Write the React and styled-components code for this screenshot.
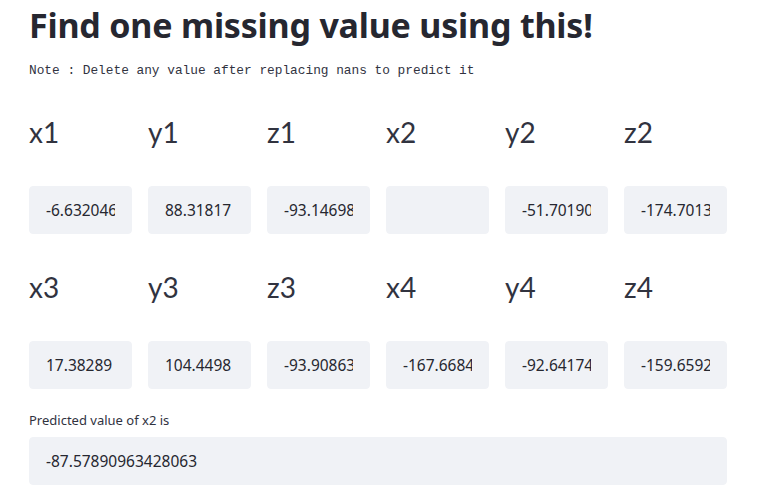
import React from "react";
import styled, { createGlobalStyle } from "styled-components";

const GlobalStyle = createGlobalStyle`
  body {
    margin: 0;
    background: #ffffff;
    color: #262730;
    font-family: Lato, "Noto Sans", sans-serif;
  }
`;

const Page = styled.div`
  width: 698px;
  padding: 0 0 0 29px;
`;

const Title = styled.h1`
  margin: 0;
  padding-top: 2px;
  font-family: "Noto Sans", sans-serif;
  font-weight: 700;
  font-size: 34px;
  line-height: 46px;
  letter-spacing: -0.2px;
  color: #262730;
`;

const Note = styled.pre`
  margin: 14px 0 0;
  font-family: "Liberation Mono", "DejaVu Sans Mono", monospace;
  font-size: 12.8px;
  line-height: 18px;
  color: #31333f;
`;

const Grid = styled.div`
  display: grid;
  grid-template-columns: repeat(6, 103px);
  column-gap: 16px;
  row-gap: 33px;
  margin-top: 32px;
`;

const Field = styled.div`
  display: flex;
  flex-direction: column;
`;

const FieldLabel = styled.h3`
  margin: 0 0 34px;
  font-family: Lato, "Noto Sans", sans-serif;
  font-weight: 400;
  font-size: 28px;
  line-height: 40px;
  color: #31333f;
`;

const InputBox = styled.div`
  box-sizing: border-box;
  display: flex;
  align-items: center;
  height: 48px;
  padding: 0 16px;
  border: 1px solid #f0f2f6;
  border-radius: 4px;
  background: #f0f2f6;
  overflow: hidden;
`;

const Input = styled.input`
  width: 100%;
  min-width: 0;
  padding: 0;
  border: none;
  background: transparent;
  font-family: "Noto Sans", sans-serif;
  font-size: 15.5px;
  color: #262730;
  outline: none;
`;

const ResultLabel = styled.label`
  display: block;
  margin-top: 22px;
  font-family: "Noto Sans", sans-serif;
  font-size: 13px;
  line-height: 18px;
  color: #31333f;
`;

const ResultBox = styled(InputBox)`
  margin-top: 8px;
`;

const fields = [
  ["x1", "-6.632046"],
  ["y1", "88.31817"],
  ["z1", "-93.14698"],
  ["x2", ""],
  ["y2", "-51.70190"],
  ["z2", "-174.7013"],
  ["x3", "17.38289"],
  ["y3", "104.4498"],
  ["z3", "-93.90863"],
  ["x4", "-167.6684"],
  ["y4", "-92.64174"],
  ["z4", "-159.6592"],
];

const App = () => {
  return (
    <Page>
      <GlobalStyle />
      <Title>Find one missing value using this!</Title>
      <Note>Note : Delete any value after replacing nans to predict it</Note>
      <Grid>
        {fields.map(([name, value]) => (
          <Field key={name}>
            <FieldLabel>{name}</FieldLabel>
            <InputBox>
              <Input type="text" defaultValue={value} />
            </InputBox>
          </Field>
        ))}
      </Grid>
      <ResultLabel>Predicted value of x2 is</ResultLabel>
      <ResultBox>
        <Input type="text" defaultValue="-87.57890963428063" readOnly />
      </ResultBox>
    </Page>
  );
};

export default App;
